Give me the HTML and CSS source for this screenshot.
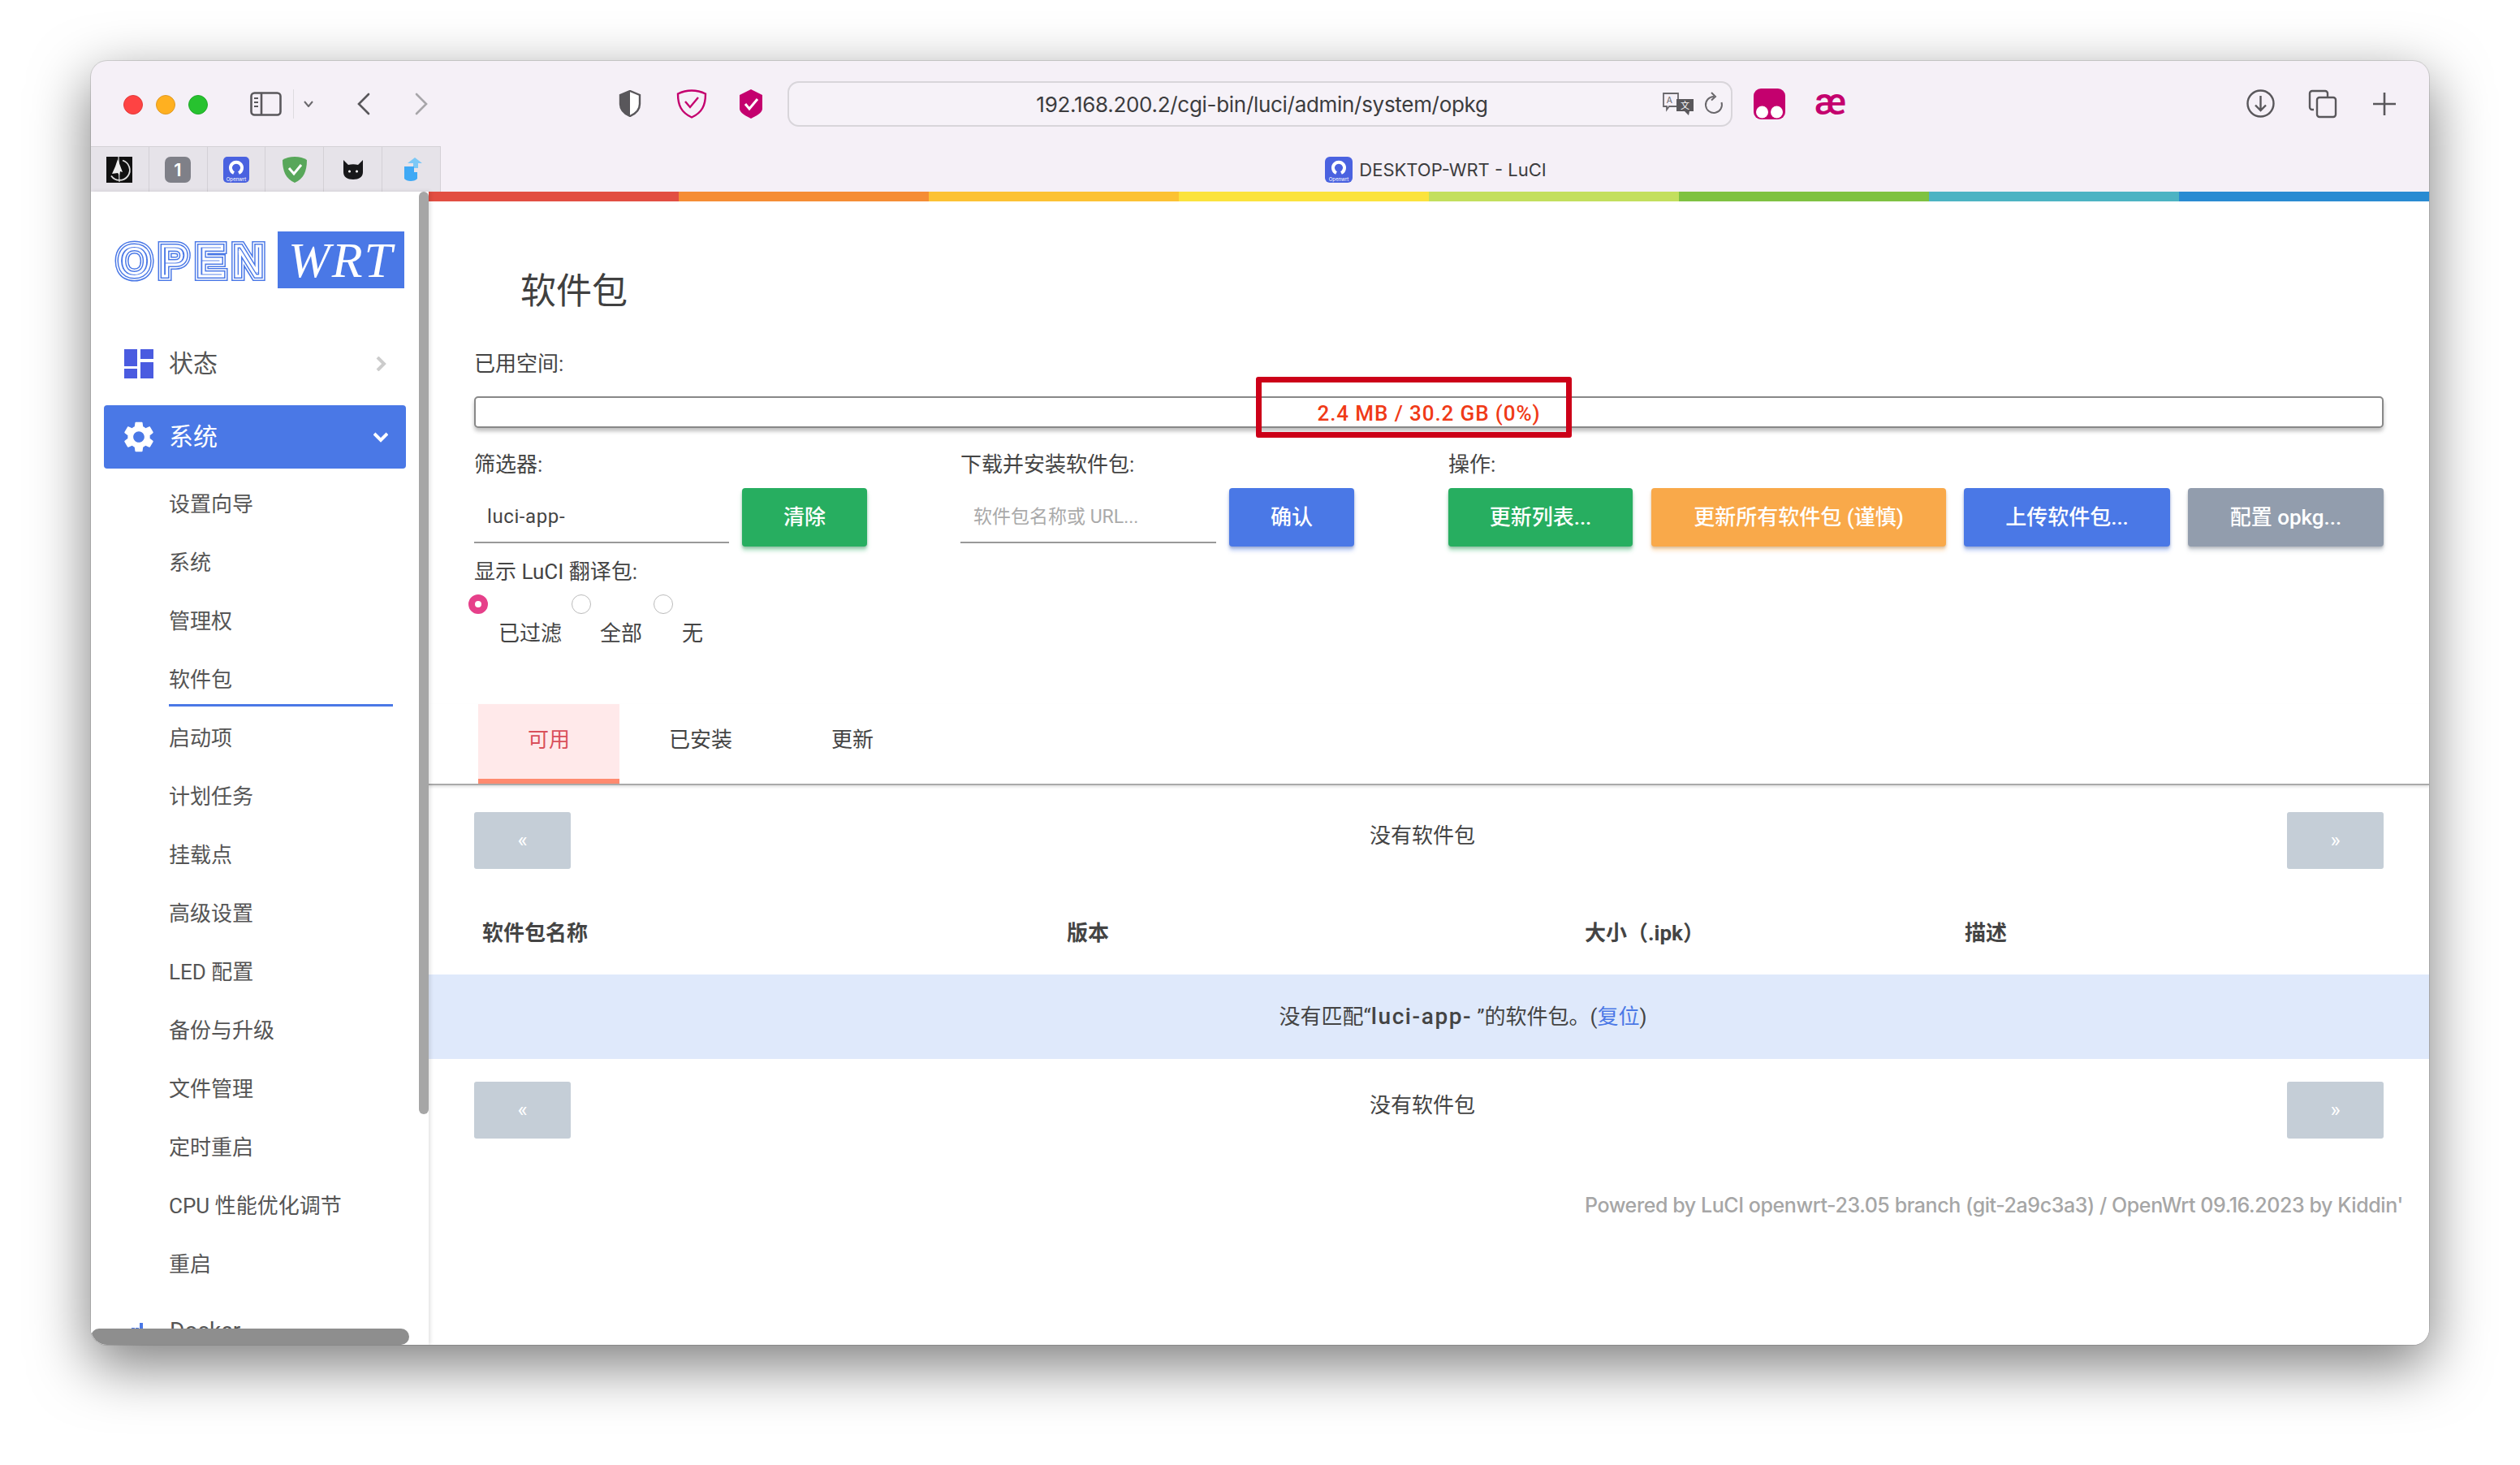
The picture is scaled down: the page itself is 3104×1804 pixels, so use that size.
FILE: index.html
```html
<!DOCTYPE html>
<html lang="zh-CN">
<head>
    <meta charset="UTF-8">
    <title>DESKTOP-WRT - LuCI</title>
    <link rel="stylesheet" href="styles.css">
</head>
<body>
<div class="window">
    <div class="toolbar">
        <span class="light light-red"></span>
        <span class="light light-amber"></span>
        <span class="light light-green"></span>

        <svg class="tb-sidebar" width="39" height="30" viewBox="0 0 39 30" fill="none" stroke="#5a585c" stroke-width="2.6">
            <rect x="1.5" y="1.5" width="36" height="27" rx="4"/>
            <path d="M14 2v26"/>
            <path d="M5 8h5M5 13h5M5 18h5" stroke-width="2.2"/>
        </svg>
        <span class="tb-sep"></span>
        <svg class="tb-chev" width="12" height="8" viewBox="0 0 12 8" fill="none" stroke="#6a686c" stroke-width="2"><path d="M1 1l5 6 5-6"/></svg>
        <svg class="tb-back" width="17" height="28" viewBox="0 0 17 28" fill="none" stroke="#59575b" stroke-width="2.6" stroke-linecap="round"><path d="M15 2L3 14l12 12"/></svg>
        <svg class="tb-forward" width="17" height="28" viewBox="0 0 17 28" fill="none" stroke="#a8a6aa" stroke-width="2.6" stroke-linecap="round"><path d="M2 2l12 12L2 26"/></svg>

        <svg class="tb-shield" width="28" height="33" viewBox="0 0 28 33">
            <path d="M14 1l12 5v11c0 8-5 12-12 15C7 29 2 25 2 17V6z" fill="#fff" stroke="#59575b" stroke-width="2.4"/>
            <path d="M14 1L2 6v11c0 8 5 12 12 15z" fill="#59575b"/>
        </svg>
        <svg class="tb-adguard" width="38" height="36" viewBox="0 0 38 36" fill="none" stroke="#c4006e">
            <path d="M19 1.5c6 0 12 1.500 17 4 0 14-4 23-17 29C6 28.500 2 19.500 2 5.500c5-2.500 11-4 17-4z" stroke-width="2.4"/>
            <path d="M11 15l6 7 10-12" stroke-width="2.4"/>
        </svg>
        <svg class="tb-badge" width="32" height="36" viewBox="0 0 32 36">
            <path d="M16 0l14 7v17c0 5-8 9-14 12C10 33 2 29 2 24V7z" fill="#c4006e"/>
            <path d="M9 18l5 6 10-12" fill="none" stroke="#fff" stroke-width="3"/>
        </svg>

        <div class="address">
            <span></span>
            <span class="address-url">192.168.200.2/cgi-bin/luci/admin/system/opkg</span>
            <span class="address-tools">
                <svg width="40" height="30" viewBox="0 0 40 30">
                    <path d="M2 2h18v16H9l-3 4v-4H2z" fill="#f5f0f7" stroke="#6a686c" stroke-width="1.800"/>
                    <text x="6" y="14" class="mini-glyph" fill="#6a686c">A</text>
                    <path d="M18 9h21v15h-5l-1 5-5-5H18z" fill="#59575b"/>
                    <text x="23" y="21" class="mini-glyph" fill="#fff">文</text>
                </svg>
                <svg width="24" height="30" viewBox="0 0 24 30" fill="none" stroke="#6a686c" stroke-width="2">
                    <path d="M12 6a10 10 0 1 0 9.500 7"/>
                    <path d="M9 1l5 5-5 4.500"/>
                </svg>
            </span>
        </div>

        <svg class="tb-pink" width="39" height="38" viewBox="0 0 39 38">
            <rect width="39" height="38" rx="9" fill="#c4006e"/>
            <circle cx="10.500" cy="29" r="7.500" fill="#fff"/>
            <circle cx="28.500" cy="29" r="7.500" fill="#fff"/>
        </svg>
        <span class="tb-ae">æ</span>

        <svg class="tb-download" width="35" height="35" viewBox="0 0 35 35" fill="none" stroke="#59575b" stroke-width="2.400">
            <circle cx="17.500" cy="17.500" r="16"/>
            <path d="M17.500 8v18M11 19.500l6.500 6.500 6.500-6.500"/>
        </svg>
        <svg class="tb-tabs" width="36" height="36" viewBox="0 0 36 36" fill="none" stroke="#59575b" stroke-width="2.400">
            <path d="M7 25H5a3 3 0 0 1-3-3V5a3 3 0 0 1 3-3h16a3 3 0 0 1 3 3v4"/>
            <rect x="11" y="10" width="23" height="24" rx="3"/>
        </svg>
        <svg class="tb-plus" width="30" height="30" viewBox="0 0 30 30" stroke="#59575b" stroke-width="2.600"><path d="M15 1v28M1 15h28"/></svg>
    </div>

    <div class="tabbar">
        <div class="pinned">
            <span class="pin">
                <svg width="32" height="32" viewBox="0 0 32 32">
                    <rect width="32" height="32" fill="#111"/>
                    <path d="M20 4.500a12.500 12.500 0 1 1-14 19" fill="none" stroke="#ddd" stroke-width="1.800"/>
                    <path d="M15 0l1 31" stroke="#ddd" stroke-width="1.200"/>
                    <path d="M14 3l-3 9-4 9 7-1 2 3 1-5 3 1-3-8z" fill="#eee"/>
                </svg>
            </span>
            <span class="pin">
                <svg width="32" height="32" viewBox="0 0 32 32">
                    <rect width="32" height="32" rx="7" fill="#7f8088"/>
                    <text x="16" y="24" text-anchor="middle" class="pin-one">1</text>
                </svg>
            </span>
            <span class="pin">
                <svg width="32" height="32" viewBox="0 0 32 32">
                    <rect width="32" height="32" rx="5" fill="#4a62e0"/>
                    <path d="M13 20a7 7 0 1 1 6 0" fill="none" stroke="#fff" stroke-width="4"/>
                    <text x="16" y="29.500" text-anchor="middle" class="pin-tiny">Openwrt</text>
                </svg>
            </span>
            <span class="pin">
                <svg width="32" height="34" viewBox="0 0 32 34">
                    <path d="M16 1c6 0 11 1.500 15 4 0 14-4 23-15 28C5 28 1 19 1 5c4-2.500 9-4 15-4z" fill="#58a75a"/>
                    <path d="M9 15l6 7 9-11" fill="none" stroke="#fff" stroke-width="3"/>
                </svg>
            </span>
            <span class="pin">
                <svg width="26" height="26" viewBox="0 0 26 26">
                    <path d="M1 1l6 6c4-1 8-1 12 0l6-6v15c0 6-5 9-12 9S1 22 1 16z" fill="#18181a"/>
                    <circle cx="8.500" cy="15" r="1.500" fill="#fff"/>
                    <circle cx="17.500" cy="15" r="1.500" fill="#fff"/>
                </svg>
            </span>
            <span class="pin">
                <svg class="pin-blur" width="26" height="30" viewBox="0 0 26 30">
                    <path d="M17 0l9 7h-5v6h-6V7h-7z" fill="#7cc8f6"/>
                    <path d="M4 11h12v7h4v8c-3 4-13 4-16 0z" fill="#3fa9f5"/>
                </svg>
            </span>
        </div>
        <div class="tab-title">
            <svg width="34" height="32" viewBox="0 0 34 32">
                <rect width="34" height="32" rx="6" fill="#4a62e0"/>
                <path d="M14 20a7 7 0 1 1 6 0" fill="none" stroke="#fff" stroke-width="4"/>
                <text x="17" y="29.500" text-anchor="middle" class="pin-tiny">Openwrt</text>
            </svg>
            <span>DESKTOP-WRT - LuCI</span>
        </div>
    </div>

    <div class="page">
        <aside class="sidebar">
            <div class="logo">
                <svg width="192" height="54" viewBox="0 0 192 54" class="logo-open">
                    <defs><text id="logo-word" x="5" y="47" textLength="180" class="logo-letters">OPEN</text></defs>
                    <use href="#logo-word" fill="none" stroke="#4a78e6" stroke-width="12"/>
                    <use href="#logo-word" fill="none" stroke="#fff" stroke-width="9"/>
                    <use href="#logo-word" fill="none" stroke="#4a78e6" stroke-width="6"/>
                    <use href="#logo-word" fill="none" stroke="#fff" stroke-width="3"/>
                </svg>
                <span class="logo-wrt">WRT</span>
            </div>

            <a class="nav-row">
                <svg width="36" height="36" viewBox="0 0 36 36" fill="#4a5be0">
                    <rect width="16" height="21"/>
                    <rect y="24" width="16" height="12"/>
                    <rect x="20" width="16" height="12"/>
                    <rect x="20" y="16" width="16" height="20"/>
                </svg>
                <span>状态</span>
                <svg class="nav-arrow" width="18" height="18" viewBox="0 0 18 18" fill="none" stroke="#ccc" stroke-width="4"><path d="M5 1l8 8-8 8"/></svg>
            </a>
            <a class="nav-row nav-row-active">
                <svg width="38" height="38" viewBox="2 2 20 20" fill="#fff"><path d="M19.140 12.940c.04-.3.06-.61.06-.94 0-.32-.02-.64-.07-.94l2.030-1.580c.18-.14.23-.41.12-.61l-1.920-3.320c-.12-.22-.37-.29-.59-.22l-2.390.96c-.5-.38-1.030-.7-1.620-.94l-.36-2.540c-.04-.24-.24-.41-.48-.41h-3.840c-.24 0-.43.17-.47.41l-.36 2.540c-.59.24-1.130.57-1.620.94l-2.390-.96c-.22-.08-.47 0-.59.22L2.740 8.870c-.12.21-.08.47.12.61l2.030 1.580c-.05.3-.09.63-.09.94s.02.64.07.94l-2.030 1.580c-.18.14-.23.41-.12.61l1.920 3.320c.12.22.37.29.59.22l2.390-.96c.5.38 1.030.7 1.620.94l.36 2.540c.05.24.24.41.48.41h3.840c.24 0 .44-.17.47-.41l.36-2.540c.59-.24 1.130-.56 1.620-.94l2.390.96c.22.08.47 0 .59-.22l1.920-3.320c.12-.22.07-.47-.12-.61l-2.010-1.580zM12 15.600c-1.980 0-3.600-1.620-3.600-3.600s1.620-3.600 3.600-3.600 3.600 1.620 3.600 3.600-1.620 3.600-3.600 3.600z"/></svg>
                <span>系统</span>
                <svg class="nav-arrow" width="18" height="18" viewBox="0 0 18 18" fill="none" stroke="#fff" stroke-width="4"><path d="M1 5l8 8 8-8"/></svg>
            </a>

            <div class="sub-nav">
                <a>设置向导</a>
                <a>系统</a>
                <a>管理权</a>
                <a class="sub-active">软件包</a>
                <a>启动项</a>
                <a>计划任务</a>
                <a>挂载点</a>
                <a>高级设置</a>
                <a>LED 配置</a>
                <a>备份与升级</a>
                <a>文件管理</a>
                <a>定时重启</a>
                <a>CPU 性能优化调节</a>
                <a>重启</a>
            </div>

            <a class="nav-row nav-row-docker">
                <svg width="36" height="36" viewBox="0 0 36 36" fill="#4a78e6">
                    <rect x="9" y="15" width="4" height="5"/>
                    <rect x="14" y="15" width="4" height="5"/>
                    <rect x="19" y="9" width="4" height="11"/>
                </svg>
                <span>Docker</span>
            </a>

            <span class="scroll-v"></span>
            <span class="scroll-h"></span>
        </aside>

        <main class="main">
            <div class="rainbow">
                <i class="c1"></i><i class="c2"></i><i class="c3"></i><i class="c4"></i>
                <i class="c5"></i><i class="c6"></i><i class="c7"></i><i class="c8"></i>
            </div>

            <h2 class="title">软件包</h2>

            <div class="section">
                <div class="label">已用空间:</div>
                <div class="usage">
                    <div class="usage-bar">2.4 MB / 30.2 GB (0%)</div>
                    <span class="callout"></span>
                </div>

                <div class="controls">
                    <div class="control-filter">
                        <div class="label">筛选器:</div>
                        <div class="field-row">
                            <input class="field" type="text" value="luci-app-">
                            <button class="btn btn-green btn-short">清除</button>
                        </div>
                    </div>
                    <div class="control-download">
                        <div class="label">下载并安装软件包:</div>
                        <div class="field-row">
                            <input class="field" type="text" placeholder="软件包名称或 URL...">
                            <button class="btn btn-blue btn-short">确认</button>
                        </div>
                    </div>
                    <div class="control-actions">
                        <div class="label">操作:</div>
                        <div class="field-row">
                            <button class="btn btn-green btn-a1">更新列表...</button>
                            <button class="btn btn-orange btn-a2">更新所有软件包 (谨慎)</button>
                            <button class="btn btn-blue btn-a3">上传软件包...</button>
                            <button class="btn btn-gray btn-a4">配置 opkg...</button>
                        </div>
                    </div>
                </div>

                <div class="label label-lang">显示 LuCI 翻译包:</div>
                <div class="radios">
                    <label class="radio radio-first"><input type="radio" name="lang" checked><span>已过滤</span></label>
                    <label class="radio radio-second"><input type="radio" name="lang"><span>全部</span></label>
                    <label class="radio"><input type="radio" name="lang"><span>无</span></label>
                </div>
            </div>

            <div class="tabs">
                <a class="tab tab-active">可用</a>
                <a class="tab">已安装</a>
                <a class="tab">更新</a>
            </div>

            <div class="pager">
                <span class="pager-btn">«</span>
                <span class="pager-text">没有软件包</span>
                <span class="pager-btn">»</span>
            </div>

            <div class="pkg-head">
                <span>软件包名称</span>
                <span>版本</span>
                <span>大小（.ipk）</span>
                <span>描述</span>
            </div>
            <div class="pkg-empty">没有匹配“<b>luci-app-</b>”的软件包。(<a>复位</a>)</div>

            <div class="pager pager-bottom">
                <span class="pager-btn">«</span>
                <span class="pager-text">没有软件包</span>
                <span class="pager-btn">»</span>
            </div>

            <footer class="footer">Powered by LuCI openwrt-23.05 branch (git-2a9c3a3) / OpenWrt 09.16.2023 by Kiddin'</footer>
        </main>
    </div>
</div>
</body>
</html>
```

FILE: styles.css
```css
body {
    margin: 0;
    height: 1804px;
    overflow: hidden;
    background-color: #fff;
    font-family: Roboto, "Noto Sans CJK SC", sans-serif;
    font-size: 26px;
    color: #444;
}

a {
    color: inherit;
    text-decoration: none;
}

.window {
    position: relative;
    left: 112px;
    top: 75px;
    width: 2880px;
    height: 1581px;
    display: flex;
    flex-direction: column;
    overflow: hidden;
    border-radius: 20px;
    background-color: #f5f0f7;
    box-shadow: 0 0 0 1px rgba(0, 0, 0, 0.12), 0 24px 70px 2px rgba(0, 0, 0, 0.5);
}

/* browser toolbar */
.toolbar {
    height: 105px;
    display: flex;
    align-items: center;
    padding-left: 40px;
    padding-top: 0;
    box-sizing: border-box;
}

.toolbar > svg {
    flex: none;
}

.light {
    width: 24px;
    height: 24px;
    border-radius: 50%;
    margin-right: 16px;
    box-sizing: border-box;
    margin-top: 2px;
}

.light-red { background-color: #fe4343; border: 1px solid #e23a3a; }
.light-amber { background-color: #ffb020; border: 1px solid #e09a22; }
.light-green { background-color: #27c22f; border: 1px solid #22a82b; margin-right: 0; }

.tb-sidebar { margin-left: 52px; }
.tb-sep { width: 1px; height: 36px; background-color: #dedbe0; margin-left: 14px; }
.tb-chev { margin-left: 12px; }
.tb-back { margin-left: 53px; }
.tb-forward { margin-left: 55px; }
.tb-shield { margin-left: 234px; }
.tb-adguard { margin-left: 43px; }
.tb-badge { margin-left: 38px; }
.tb-pink { margin-left: 26px; }
.tb-ae { margin-left: 36px; width: 37px; font: 500 46px/1 Roboto, sans-serif; color: #c4006e; text-align: center; padding-bottom: 6px; }
.tb-download { margin-left: 495px; }
.tb-tabs { margin-left: 41px; }
.tb-plus { margin-left: 43px; }

.address {
    flex: none;
    width: 1164px;
    height: 56px;
    margin-left: 29px;
    box-sizing: border-box;
    display: grid;
    grid-template-columns: 1fr auto 1fr;
    align-items: center;
    border: 2px solid #d8d5da;
    border-radius: 14px;
    background-color: #f6f2f8;
}

.address-url {
    padding: 2px 0 0 5px;
    font-family: Inter, sans-serif;
    font-size: 26px;
    letter-spacing: -0.3px;
    color: #3c3c3e;
}

.address-tools {
    display: flex;
    justify-content: flex-end;
    gap: 12px;
    padding-right: 9px;
}

.mini-glyph {
    font-family: "Noto Sans CJK SC", sans-serif;
    font-size: 11px;
}

/* tab strip */
.tabbar {
    height: 56px;
    display: flex;
    flex: none;
}

.pinned {
    width: 431px;
    display: flex;
    flex: none;
    background-color: #e6e3e9;
    border-top: 1px solid #d4d1d6;
    box-sizing: border-box;
}

.pin {
    width: 72px;
    display: flex;
    align-items: center;
    justify-content: center;
    border-right: 1px solid #d4d1d6;
    box-sizing: border-box;
}

.pin-one {
    font-family: Inter, sans-serif;
    font-size: 22px;
    font-weight: 600;
    fill: #fff;
}

.pin-tiny {
    font-family: Inter, sans-serif;
    font-size: 6px;
    fill: #fff;
}

.pin-blur {
    filter: blur(0.7px);
}

.tab-title {
    flex: 1;
    display: flex;
    align-items: center;
    justify-content: center;
    gap: 8px;
    padding: 1px 0 0 2px;
    font-family: Inter, sans-serif;
    font-size: 22px;
    color: #3c3c3e;
}

/* page */
.page {
    flex: 1;
    display: flex;
    min-height: 0;
    background-color: #fff;
}

.sidebar {
    position: relative;
    width: 416px;
    flex: none;
    overflow: hidden;
    color: #555;
    box-shadow: 2px 0 5px rgba(0, 0, 0, 0.12);
    z-index: 1;
    background-color: #fff;
}

.logo {
    height: 173px;
    box-sizing: border-box;
    display: flex;
    align-items: flex-start;
    padding: 49px 0 0 28px;
}

.logo-open {
    margin-top: 8px;
    flex: none;
}

.logo-letters {
    font-family: "Liberation Sans", sans-serif;
    font-size: 53px;
}

.logo-wrt {
    width: 156px;
    height: 70px;
    margin-left: 10px;
    text-align: center;
    background-color: #4a78e6;
    color: #fff;
    font-family: "Liberation Serif", serif;
    font-style: italic;
    font-size: 62px;
    line-height: 70px;
    letter-spacing: 2px;
}

.nav-row {
    height: 78px;
    display: flex;
    align-items: center;
    gap: 19px;
    padding: 0 22px 0 41px;
    margin-bottom: 12px;
    box-sizing: border-box;
    font-size: 30px;
    width: 388px;
}

.nav-row span {
    padding-bottom: 7px;
}

.nav-arrow {
    margin-left: auto;
}

.nav-row-active {
    width: 372px;
    margin: 0 0 5px 16px;
    padding: 0 22px 0 24px;
    gap: 18px;
    border-radius: 4px;
    background-color: #4a78e6;
    color: #fff;
}

.nav-row-docker {
    margin-top: 9px;
    gap: 20px;
    font-size: 28px;
}

.nav-row-docker span {
    padding-bottom: 0;
}

.sub-nav a {
    position: relative;
    display: flex;
    align-items: center;
    height: 72px;
    width: 276px;
    margin-left: 96px;
}

.sub-active::after {
    content: "";
    position: absolute;
    left: 0;
    right: 0;
    bottom: 0;
    height: 3px;
    background-color: #4a78e6;
}

.scroll-v {
    position: absolute;
    top: 0;
    right: 0;
    width: 12px;
    height: 1136px;
    border-radius: 6px;
    background-color: #a6a6a6;
}

.scroll-h {
    position: absolute;
    left: 0;
    bottom: 0;
    width: 392px;
    height: 20px;
    border-radius: 10px;
    background-color: #8e8e8e;
}

.main {
    flex: 1;
    min-width: 0;
    overflow: hidden;
}

.rainbow {
    display: grid;
    grid-template-columns: repeat(8, 1fr);
    height: 12px;
}

.c1 { background-color: #e24e42; }
.c2 { background-color: #f58d35; }
.c3 { background-color: #fcc234; }
.c4 { background-color: #fbe33d; }
.c5 { background-color: #c3df5e; }
.c6 { background-color: #7fc242; }
.c7 { background-color: #4db3c3; }
.c8 { background-color: #2a8bd2; }

.title {
    margin: 81px 0 0 113px;
    height: 60px;
    line-height: 60px;
    font-size: 44px;
    font-weight: 400;
    color: #404040;
}

.section {
    padding: 43px 56px 0;
}

.label {
    height: 32px;
    line-height: 32px;
}

.usage {
    position: relative;
    margin-top: 24px;
}

.usage-bar {
    height: 39px;
    box-sizing: border-box;
    border: 2px solid #888;
    border-radius: 5px;
    background-color: #fff;
    box-shadow: 0 4px 5px rgba(0, 0, 0, 0.25);
    text-align: center;
    line-height: 38px;
    font-size: 26px;
    font-weight: 500;
    letter-spacing: 0.9px;
    color: #f03a17;
}

/* red annotation drawn over the bar */
.callout {
    position: absolute;
    left: 963px;
    top: -24px;
    width: 389px;
    height: 75px;
    box-sizing: border-box;
    border: 7px solid #cc0018;
    border-radius: 3px;
}

.controls {
    display: flex;
    margin-top: 29px;
}

.control-filter { width: 599px; }
.control-download { width: 601px; }
.control-actions { flex: 1; }

.field-row {
    display: flex;
    gap: 16px;
    margin-top: 13px;
}

.field {
    width: 314px;
    height: 68px;
    box-sizing: border-box;
    padding: 4px 16px 0;
    border: 0;
    border-bottom: 2px solid #999;
    outline: none;
    font-family: Roboto, "Noto Sans CJK SC", sans-serif;
    font-size: 24px;
    letter-spacing: 0.6px;
    color: #444;
    background: transparent;
}

.control-download .field {
    width: 315px;
    letter-spacing: 0;
}

.field::placeholder {
    color: #aaa;
    opacity: 1;
    font-size: 23px;
}

.btn {
    height: 72px;
    flex: none;
    padding: 0 0 6px;
    border: 0;
    border-radius: 4px;
    color: #fff;
    font-family: Roboto, "Noto Sans CJK SC", sans-serif;
    font-size: 26px;
    font-weight: 500;
}

.btn-short { width: 154px; }
.btn-a1 { width: 227px; margin-right: 7px; }
.btn-a2 { width: 363px; margin-right: 6px; }
.btn-a3 { width: 254px; margin-right: 6px; }
.btn-a4 { width: 241px; }

.btn-green { background-color: #27ae60; box-shadow: 0 5px 5px rgba(39, 174, 96, 0.35), 0 2px 3px rgba(0, 0, 0, 0.2); }
.btn-blue { background-color: #4a78e6; box-shadow: 0 5px 5px rgba(74, 120, 230, 0.35), 0 2px 3px rgba(0, 0, 0, 0.2); }
.btn-orange { background-color: #f9a94a; box-shadow: 0 5px 5px rgba(249, 169, 74, 0.35), 0 2px 3px rgba(0, 0, 0, 0.2); }
.btn-gray { background-color: #929dad; box-shadow: 0 5px 5px rgba(146, 157, 173, 0.35), 0 2px 3px rgba(0, 0, 0, 0.2); }

.label-lang {
    margin-top: 15px;
}

.radios {
    display: flex;
    margin: 12px 0 0 -7px;
}

.radio {
    width: 101px;
    display: block;
}

.radio-first { width: 127px; }

.radio input {
    display: block;
    appearance: none;
    width: 24px;
    height: 24px;
    margin: 0;
    border: 1.500px solid #bbb;
    border-radius: 50%;
    background-color: #fff;
    box-sizing: border-box;
}

.radio input:checked {
    border: 8px solid #e6408a;
}

.radio span {
    display: block;
    height: 32px;
    margin-top: 8px;
    padding-left: 35px;
    line-height: 32px;
}

.radio-first span { padding-left: 37px; }

.tabs {
    display: flex;
    height: 100px;
    margin-top: 71px;
    padding-left: 61px;
    box-sizing: border-box;
    border-bottom: 2px solid #aaa;
    box-shadow: 0 2px 3px rgba(0, 0, 0, 0.12);
}

.tab {
    padding: 0 61px;
    line-height: 88px;
}

.tab-active {
    height: 98px;
    box-sizing: border-box;
    border-bottom: 6px solid #ff8a6f;
    background-color: #ffe9ea;
    color: #d9505a;
}

.pager {
    display: flex;
    justify-content: space-between;
    margin: 33px 56px 0;
    height: 70px;
}

.pager-btn {
    width: 119px;
    height: 70px;
    border-radius: 3px;
    background-color: #c5ced7;
    color: #fff;
    text-align: center;
    line-height: 68px;
    font-size: 26px;
}

.pager-text {
    padding-right: 16px;
    line-height: 58px;
}

.pager-bottom {
    margin-top: 28px;
    height: 71px;
}

.pkg-head {
    display: grid;
    grid-template-columns: 720px 638px 468px 1fr;
    align-items: center;
    height: 102px;
    margin-top: 28px;
    padding: 0 0 5px 66px;
    box-sizing: border-box;
    font-weight: 700;
}

.pkg-empty {
    height: 104px;
    padding-left: 84px;
    text-align: center;
    line-height: 104px;
    background-color: #dfe9fb;
}

.pkg-empty b {
    padding-right: 6px;
    font-size: 28px;
    font-weight: 500;
    letter-spacing: 1.6px;
}

.pkg-empty a {
    color: #4a78e6;
}

.footer {
    margin-top: 65px;
    padding-right: 32px;
    text-align: right;
    line-height: 32px;
    color: #a6a6a6;
    font-family: Inter, sans-serif;
    font-size: 25px;
    font-weight: 500;
    letter-spacing: -0.42px;
}
```
